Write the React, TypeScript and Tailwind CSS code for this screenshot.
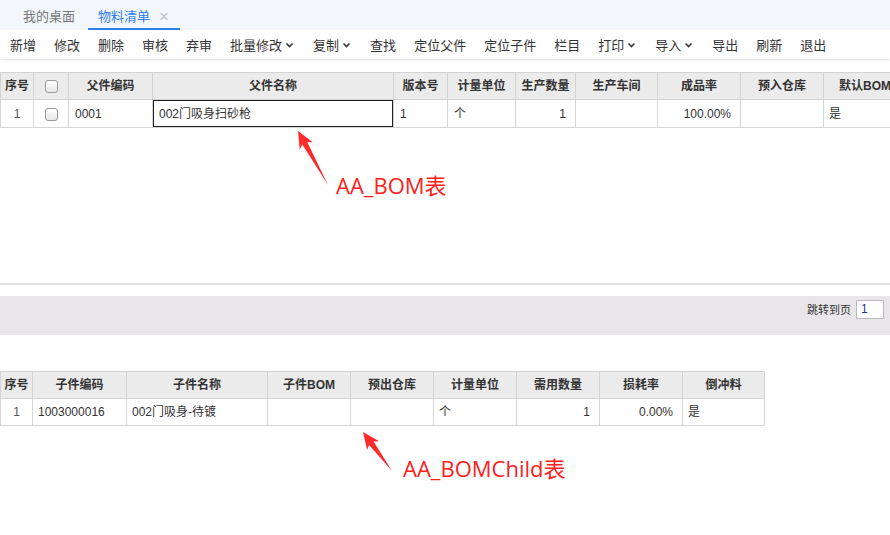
import React from "react";

const FONT = '"Liberation Sans", "Noto Sans CJK SC", Arial, sans-serif';

function Chevron() {
  return (
    <svg width="11" height="8" viewBox="0 0 11 8" className="ml-[2px]">
      <path d="M2.5 2.5 L5.5 5.5 L8.5 2.5" fill="none" stroke="#333" strokeWidth="1.6" />
    </svg>
  );
}

function Arrow({ tip, tail }: { tip: [number, number]; tail: [number, number] }) {
  const dx = tail[0] - tip[0];
  const dy = tail[1] - tip[1];
  const len = Math.hypot(dx, dy);
  const ux = dx / len;
  const uy = dy / len;
  const nx = -uy;
  const ny = ux;
  const p = (a: number, b: number) => `${tip[0] + ux * a + nx * b},${tip[1] + uy * a + ny * b}`;
  const pts = [p(0, 0), p(17, 7.5), p(14, 2.8), `${tail[0]},${tail[1]}`, p(14, -2.8), p(17, -7.5)].join(" ");
  return <polygon points={pts} fill="#ff2a2a" />;
}

function Checkbox() {
  return (
    <span className="inline-block w-[13px] h-[13px] rounded-[3px] border border-[#9a9a9a] bg-gradient-to-b from-white to-[#e6e6e6] align-middle" />
  );
}

const th = "border border-[#d3d3d3] font-bold text-[12px] text-[#333] text-center px-[2px] whitespace-nowrap overflow-hidden";
const td = "border border-[#d6d6d6] text-[12px] text-[#333] whitespace-nowrap overflow-hidden";

export default function App() {
  const tools: [string, boolean][] = [
    ["新增", false],
    ["修改", false],
    ["删除", false],
    ["审核", false],
    ["弃审", false],
    ["批量修改", true],
    ["复制", true],
    ["查找", false],
    ["定位父件", false],
    ["定位子件", false],
    ["栏目", false],
    ["打印", true],
    ["导入", true],
    ["导出", false],
    ["刷新", false],
    ["退出", false],
  ];
  return (
    <div className="relative w-[890px] h-[535px] overflow-hidden bg-white" style={{ fontFamily: FONT }}>
      {/* tabs */}
      <div className="h-[30px] bg-[#f3f6fb] flex">
        <div className="w-[88px] pl-[23px] pt-[6px] text-[13px] text-[#777] leading-[22px]">我的桌面</div>
        <div className="w-[92px] h-[30px] pl-[10px] pt-[6px] border-b-[2px] border-[#2f7fe6] flex items-start">
          <span className="text-[13px] text-[#2f7fe6] leading-[22px]">物料清单</span>
          <span className="ml-[9px] text-[17px] text-[#c4c4c4] leading-[21px]">×</span>
        </div>
      </div>
      {/* toolbar */}
      <div className="h-[29px] bg-white flex items-center pl-[10px] gap-[18px] shadow-[0_1px_2px_rgba(0,0,0,0.12)] relative">
        {tools.map(([t, dd]) => (
          <div key={t} className="flex items-center text-[13px] text-[#333] leading-[16px]" style={{ fontFamily: '"Noto Sans CJK SC", sans-serif' }}>
            <span>{t}</span>
            {dd && <Chevron />}
          </div>
        ))}
      </div>
      <div className="h-[13px]" />
      {/* table 1 */}
      <div className="w-[890px] overflow-hidden">
        <table className="table-fixed border-collapse w-[940px]">
          <colgroup>
            <col className="w-[33px]" />
            <col className="w-[35px]" />
            <col className="w-[84px]" />
            <col className="w-[241px]" />
            <col className="w-[54px]" />
            <col className="w-[68px]" />
            <col className="w-[60px]" />
            <col className="w-[82px]" />
            <col className="w-[83px]" />
            <col className="w-[83px]" />
            <col className="w-[117px]" />
          </colgroup>
          <thead>
            <tr className="h-[27px] bg-[#ebebeb]">
              <th className={th}>序号</th>
              <th className={th}>
                <Checkbox />
              </th>
              <th className={th}>父件编码</th>
              <th className={th}>父件名称</th>
              <th className={th}>版本号</th>
              <th className={th}>计量单位</th>
              <th className={th}>生产数量</th>
              <th className={th}>生产车间</th>
              <th className={th}>成品率</th>
              <th className={th}>预入仓库</th>
              <th className={th + " text-left pl-[15px]"}>默认BOM</th>
            </tr>
          </thead>
          <tbody>
            <tr className="h-[28px]">
              <td className={td + " text-center text-[#555]"}>1</td>
              <td className={td + " text-center"}>
                <Checkbox />
              </td>
              <td className={td + " pl-[6px]"}>0001</td>
              <td className={td + " pl-[6px] shadow-[inset_0_0_0_1px_#1e1e1e]"}>002门吸身扫砂枪</td>
              <td className={td + " pl-[6px]"}>1</td>
              <td className={td + " pl-[6px]"}>个</td>
              <td className={td + " text-right pr-[9px]"}>1</td>
              <td className={td}></td>
              <td className={td + " text-right pr-[9px]"}>100.00%</td>
              <td className={td}></td>
              <td className={td + " pl-[5px]"}>是</td>
            </tr>
          </tbody>
        </table>
      </div>
      {/* empty grid area */}
      <div className="h-[155px] relative">
        <div className="absolute left-[336px] top-[44px] text-[22px] leading-[26px] text-[#ff2020]" style={{ fontFamily: '"Open Sans", "Noto Sans CJK SC", sans-serif' }}>
          AA_BOM表
        </div>
      </div>
      <div className="border-t-[2px] border-[#e2e2e2]" />
      <div className="h-[11px]" />
      {/* pager */}
      <div className="h-[39px] bg-[#e8e6e8] flex justify-end items-start pt-[4px] pr-[6px]">
        <span className="text-[11px] text-[#333] leading-[19px] mr-[5px]" style={{ fontFamily: '"Noto Sans CJK SC", sans-serif' }}>
          跳转到页
        </span>
        <div className="w-[28px] h-[19px] bg-white border border-[#b9b9b9] text-[12px] leading-[17px] pl-[4px] text-[#1a3a8a]">1</div>
      </div>
      <div className="h-[36px]" />
      {/* table 2 */}
      <table className="table-fixed border-collapse w-[764px]">
        <colgroup>
          <col className="w-[32px]" />
          <col className="w-[94px]" />
          <col className="w-[141px]" />
          <col className="w-[83px]" />
          <col className="w-[83px]" />
          <col className="w-[83px]" />
          <col className="w-[83px]" />
          <col className="w-[83px]" />
          <col className="w-[82px]" />
        </colgroup>
        <thead>
          <tr className="h-[27px] bg-[#ebebeb]">
            <th className={th}>序号</th>
            <th className={th}>子件编码</th>
            <th className={th}>子件名称</th>
            <th className={th}>子件BOM</th>
            <th className={th}>预出仓库</th>
            <th className={th}>计量单位</th>
            <th className={th}>需用数量</th>
            <th className={th}>损耗率</th>
            <th className={th}>倒冲料</th>
          </tr>
        </thead>
        <tbody>
          <tr className="h-[27px]">
            <td className={td + " text-center text-[#555]"}>1</td>
            <td className={td + " pl-[5px]"}>1003000016</td>
            <td className={td + " pl-[5px]"}>002门吸身-待镀</td>
            <td className={td}></td>
            <td className={td}></td>
            <td className={td + " pl-[5px]"}>个</td>
            <td className={td + " text-right pr-[9px]"}>1</td>
            <td className={td + " text-right pr-[9px]"}>0.00%</td>
            <td className={td + " pl-[5px]"}>是</td>
          </tr>
        </tbody>
      </table>
      <div className="relative">
        <div className="absolute left-[403px] top-[29px] text-[22px] leading-[26px] text-[#ff2020]" style={{ fontFamily: '"Open Sans", "Noto Sans CJK SC", sans-serif' }}>
          AA_BOMChild表
        </div>
      </div>
      {/* annotation arrows overlay */}
      <svg className="absolute left-0 top-0 pointer-events-none" width="890" height="535">
        <Arrow tip={[298, 131]} tail={[328, 185]} />
        <Arrow tip={[363, 432]} tail={[392, 471]} />
      </svg>
    </div>
  );
}
